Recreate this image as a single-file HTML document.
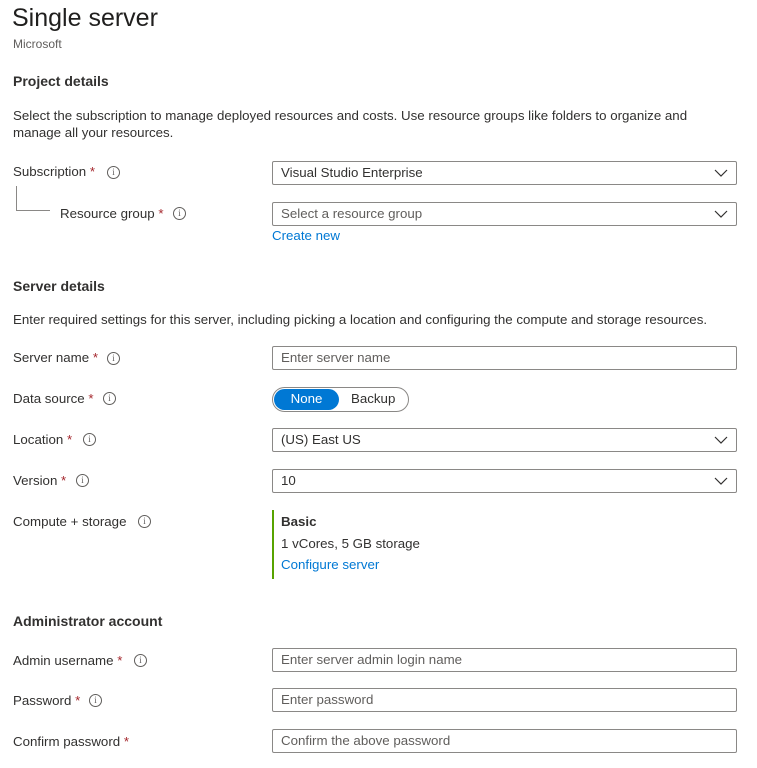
<!DOCTYPE html>
<html><head><meta charset="utf-8"><style>
*{margin:0;padding:0;box-sizing:border-box}
body{width:757px;height:768px;background:#fff;position:relative;font-family:"Liberation Sans",sans-serif;color:#323130;font-size:13.3px;overflow:hidden}
.a{position:absolute;white-space:nowrap;line-height:16px}
h1{position:absolute;left:12px;top:3px;font-size:25px;font-weight:400;color:#201f1e;line-height:30px}
.h{position:absolute;left:13px;font-size:14px;font-weight:700;color:#323130;line-height:18px}
.s{color:#a4262c}
.i{position:absolute;width:13px;height:13px;border:1px solid #605e5c;border-radius:50%;font-size:9px;line-height:11px;text-align:center;color:#605e5c;font-family:"Liberation Serif",serif}
.in{position:absolute;left:272px;width:465px;height:24px;border:1px solid #8a8886;border-radius:2px;padding-left:8px;line-height:22px;color:#323130}
.ph{color:#605e5c}
.in svg{position:absolute;right:8px;top:6px}
.lk{color:#0078d4}
</style></head><body>
<h1>Single server</h1>
<div class="a" style="left:13px;top:36px;font-size:12px;color:#605e5c">Microsoft</div>
<div class="h" style="top:72px">Project details</div>
<div class="a" style="left:13px;top:108px">Select the subscription to manage deployed resources and costs. Use resource groups like folders to organize and</div>
<div class="a" style="left:13px;top:125px">manage all your resources.</div>

<div class="a" style="left:13px;top:164px">Subscription <span class="s">*</span></div><div class="i" style="left:107px;top:166px">i</div>
<div class="in" style="top:161px">Visual Studio Enterprise<svg width="14" height="10" viewBox="0 0 14 10"><path d="M1 2l6 6 6-6" stroke="#323130" fill="none" stroke-width="1.2"/></svg></div>
<div style="position:absolute;left:16px;top:186px;width:34px;height:25px;border-left:1px solid #8a8886;border-bottom:1px solid #8a8886"></div>
<div class="a" style="left:60px;top:206px">Resource group <span class="s">*</span></div><div class="i" style="left:173px;top:207px">i</div>
<div class="in" style="top:202px"><span class="ph">Select a resource group</span><svg width="14" height="10" viewBox="0 0 14 10"><path d="M1 2l6 6 6-6" stroke="#323130" fill="none" stroke-width="1.2"/></svg></div>
<div class="a lk" style="left:272px;top:228px">Create new</div>

<div class="h" style="top:277px">Server details</div>
<div class="a" style="left:13px;top:312px">Enter required settings for this server, including picking a location and configuring the compute and storage resources.</div>

<div class="a" style="left:13px;top:350px">Server name <span class="s">*</span></div><div class="i" style="left:107px;top:352px">i</div>
<div class="in" style="top:346px"><span class="ph">Enter server name</span></div>

<div class="a" style="left:13px;top:391px">Data source <span class="s">*</span></div><div class="i" style="left:103px;top:392px">i</div>
<div style="position:absolute;left:272px;top:387px;width:137px;height:25px;border:1px solid #8a8886;border-radius:13px"></div>
<div style="position:absolute;left:274px;top:389px;width:65px;height:21px;background:#0078d4;border-radius:11px;color:#fff;text-align:center;line-height:19px">None</div>
<div class="a" style="left:351px;top:391px">Backup</div>

<div class="a" style="left:13px;top:432px">Location <span class="s">*</span></div><div class="i" style="left:83px;top:433px">i</div>
<div class="in" style="top:428px">(US) East US<svg width="14" height="10" viewBox="0 0 14 10"><path d="M1 2l6 6 6-6" stroke="#323130" fill="none" stroke-width="1.2"/></svg></div>

<div class="a" style="left:13px;top:473px">Version <span class="s">*</span></div><div class="i" style="left:76px;top:474px">i</div>
<div class="in" style="top:469px">10<svg width="14" height="10" viewBox="0 0 14 10"><path d="M1 2l6 6 6-6" stroke="#323130" fill="none" stroke-width="1.2"/></svg></div>

<div class="a" style="left:13px;top:514px">Compute + storage</div><div class="i" style="left:138px;top:515px">i</div>
<div style="position:absolute;left:272px;top:510px;width:2px;height:69px;background:#57a300"></div>
<div class="a" style="left:281px;top:514px;font-weight:700">Basic</div>
<div class="a" style="left:281px;top:536px">1 vCores, 5 GB storage</div>
<div class="a lk" style="left:281px;top:557px">Configure server</div>

<div class="h" style="top:612px">Administrator account</div>
<div class="a" style="left:13px;top:653px">Admin username <span class="s">*</span></div><div class="i" style="left:134px;top:654px">i</div>
<div class="in" style="top:648px"><span class="ph">Enter server admin login name</span></div>
<div class="a" style="left:13px;top:693px">Password <span class="s">*</span></div><div class="i" style="left:89px;top:694px">i</div>
<div class="in" style="top:688px"><span class="ph">Enter password</span></div>
<div class="a" style="left:13px;top:734px">Confirm password <span class="s">*</span></div>
<div class="in" style="top:729px"><span class="ph">Confirm the above password</span></div>
</body></html>
